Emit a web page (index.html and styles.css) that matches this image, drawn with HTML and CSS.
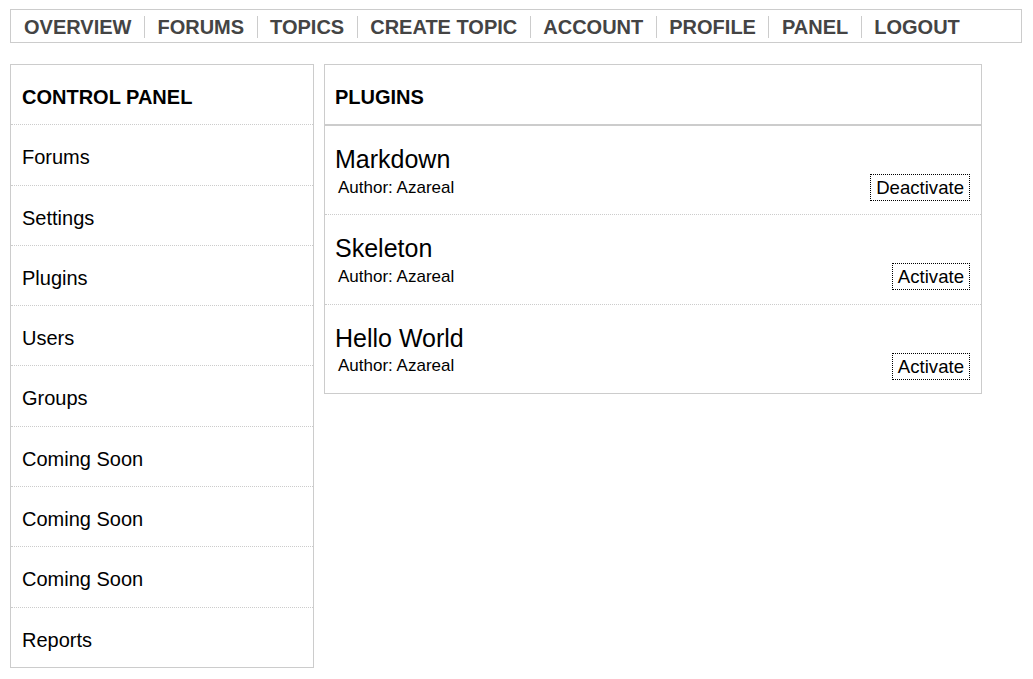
FILE: index.html
```html
<!DOCTYPE html>
<html>
<head>
<meta charset="utf-8">
<link rel="stylesheet" href="styles.css">
</head>
<body>
<nav class="nav">
  <a class="nav-item">OVERVIEW</a>
  <a class="nav-item">FORUMS</a>
  <a class="nav-item">TOPICS</a>
  <a class="nav-item">CREATE TOPIC</a>
  <a class="nav-item">ACCOUNT</a>
  <a class="nav-item">PROFILE</a>
  <a class="nav-item">PANEL</a>
  <a class="nav-item">LOGOUT</a>
</nav>
<main class="main">
  <aside class="sidebar">
    <div class="side-head">CONTROL PANEL</div>
    <div class="side-row">Forums</div>
    <div class="side-row">Settings</div>
    <div class="side-row">Plugins</div>
    <div class="side-row">Users</div>
    <div class="side-row">Groups</div>
    <div class="side-row">Coming Soon</div>
    <div class="side-row">Coming Soon</div>
    <div class="side-row">Coming Soon</div>
    <div class="side-row">Reports</div>
  </aside>
  <section class="panel">
    <div class="panel-head">PLUGINS</div>
    <div class="plugin">
      <div class="plugin-name">Markdown</div>
      <div class="plugin-meta">
        <span class="plugin-author">Author: Azareal</span>
        <button class="btn">Deactivate</button>
      </div>
    </div>
    <div class="plugin">
      <div class="plugin-name">Skeleton</div>
      <div class="plugin-meta">
        <span class="plugin-author">Author: Azareal</span>
        <button class="btn">Activate</button>
      </div>
    </div>
    <div class="plugin">
      <div class="plugin-name">Hello World</div>
      <div class="plugin-meta">
        <span class="plugin-author">Author: Azareal</span>
        <button class="btn">Activate</button>
      </div>
    </div>
  </section>
</main>
</body>
</html>
```
FILE: styles.css
```css
html, body {
  margin: 0;
  background: #fff;
}
body {
  padding: 9px 11px 0 10px;
  font-family: "Liberation Sans", Arial, sans-serif;
  color: #000;
}
.nav {
  display: flex;
  border: 1px solid #ccc;
  padding: 6px 0 4px 0;
}
.nav-item {
  font-size: 20px;
  font-weight: bold;
  color: #444;
  line-height: 22px;
  padding: 0 12.5px;
  border-left: 1px solid #ccc;
}
.nav-item:first-child {
  border-left: none;
  padding-left: 13px;
}
.main {
  display: flex;
  align-items: flex-start;
  gap: 10px;
  margin-top: 21px;
}
.sidebar {
  width: 302px;
  border: 1px solid #ccc;
}
.side-head, .side-row {
  font-size: 20px;
  line-height: 25.3px;
  padding: 20px 11px 14px 11px;
  border-bottom: 1px dotted #ccc;
}
.side-head {
  font-weight: bold;
}
.side-row:last-child {
  border-bottom: none;
}
.panel {
  width: 656px;
  border: 1px solid #ccc;
}
.panel-head {
  font-size: 20px;
  font-weight: bold;
  line-height: 25px;
  padding: 20px 10px 14px 10px;
  border-bottom: 2px solid #ccc;
}
.plugin {
  padding: 19px 11px 13.4px 10px;
  border-bottom: 1px dotted #ccc;
}
.plugin:last-child {
  border-bottom: none;
}
.plugin-name {
  font-size: 25px;
  line-height: 29px;
}
.plugin-meta {
  display: flex;
  justify-content: space-between;
  align-items: center;
}
.plugin-author {
  font-size: 17px;
  padding-left: 3px;
}
.btn {
  font-family: "Liberation Sans", Arial, sans-serif;
  font-size: 18.6px;
  line-height: 21px;
  padding: 2px 5px;
  background: #fff;
  color: #000;
  border: 1px dotted #000;
  border-radius: 0;
  margin: 0;
}
```
